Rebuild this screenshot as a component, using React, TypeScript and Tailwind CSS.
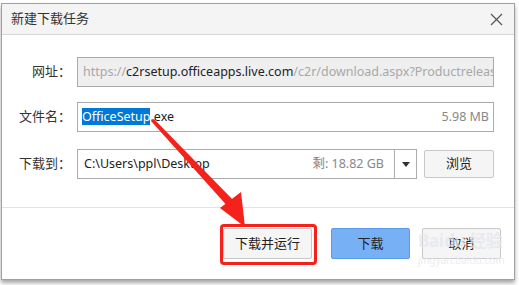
const cjk = '"Noto Sans", "Noto Sans CJK SC", sans-serif';

function CloseIcon() {
  return (
    <svg width="13" height="13" viewBox="0 0 13 13" className="text-[#555]">
      <path d="M1 1 L12 12 M12 1 L1 12" stroke="currentColor" strokeWidth="1.2" fill="none" />
    </svg>
  );
}

function Label({ children }: { children: React.ReactNode }) {
  return <div className="w-[69px] shrink-0 text-right text-[13px] text-[#333]">{children}</div>;
}

export default function App() {
  return (
    <div className="relative h-[285px] w-[519px] overflow-hidden bg-white" style={{ fontFamily: cjk }}>
      <div className="ml-px mt-[3px] flex h-[277px] w-[514px] flex-col border border-[#a0a0a0] bg-white shadow-[0_3px_4px_rgba(0,0,0,0.35)]">
        {/* title bar */}
        <div className="flex h-[31px] shrink-0 items-center justify-between border-b border-[#d6d6d6] bg-[#f4f4f4] pl-[9px] pr-[11px]">
          <span className="text-[13px] text-[#333]">新建下载任务</span>
          <CloseIcon />
        </div>

        {/* form */}
        <div className="flex flex-col pt-[22px]">
          <div className="flex items-center">
            <Label>网址：</Label>
            <div className="ml-[6px] flex h-[30px] w-[417px] items-center overflow-hidden whitespace-nowrap border border-[#ababab] bg-[#efefef] pl-[5px] text-[12.5px]">
              <span className="text-[#a8a8a8]">https://</span>
              <span className="text-[#222]">c2rsetup.officeapps.live.com</span>
              <span className="text-[#a8a8a8]">/c2r/download.aspx?Productreleas</span>
            </div>
          </div>

          <div className="mt-[15px] flex items-center">
            <Label>文件名：</Label>
            <div className="ml-[6px] flex h-[30px] w-[417px] items-center justify-between border border-[#ababab] bg-white pl-[4px] pr-[4px] text-[12.5px]">
              <span className="text-[#222]">
                <span className="bg-[#0078d7] text-white">OfficeSetup</span>.exe
              </span>
              <span className="text-[#888]">5.98 MB</span>
            </div>
          </div>

          <div className="mt-[17px] flex items-center">
            <Label>下载到：</Label>
            <div className="ml-[6px] flex h-[30px] w-[340px] items-center border border-[#ababab] bg-white text-[12.5px]">
              <span className="flex-1 pl-[6px] text-[#222]">C:\Users\ppl\Desktop</span>
              <span className="pr-[10px] text-[#888]">剩: 18.82 GB</span>
              <div className="flex h-full w-[22px] items-center justify-center border-l border-[#ababab]">
                <svg width="8" height="5" viewBox="0 0 8 5">
                  <path d="M0 0 H8 L4 5 Z" fill="#333" />
                </svg>
              </div>
            </div>
            <button className="ml-[7px] flex h-[28px] w-[70px] items-center justify-center rounded-[2px] border border-[#c8c8c8] bg-[#f5f5f5] text-[13px] text-[#222]">
              浏览
            </button>
          </div>
        </div>

        <div className="mt-[28px] border-t border-[#e3e3e3]" />

        {/* footer */}
        <div className="flex justify-end gap-[12px] pr-[13px] pt-[20px]">
          <div className="relative mr-[7px]">
            <button className="flex h-[31px] w-[89px] items-center justify-center rounded-[2px] border border-[#c8c8c8] bg-[#f5f5f5] text-[13px] text-[#222]">
              下载并运行
            </button>
            <div className="pointer-events-none absolute -bottom-[6px] -left-[3px] -right-[5px] -top-[4px] rounded-[4px] border-[3px] border-[#f5221b]" />
          </div>
          <button className="flex h-[31px] w-[79px] items-center justify-center rounded-[2px] border border-[#5b9ae6] bg-[#78b0f6] text-[13px] text-[#222]">
            下载
          </button>
          <button className="flex h-[31px] w-[79px] items-center justify-center rounded-[2px] border border-[#c8c8c8] bg-[#f5f5f5] text-[13px] text-[#222]">
            取消
          </button>
        </div>
      </div>

      {/* watermark */}
      <div className="pointer-events-none absolute left-[418px] top-[232px] flex flex-col items-start whitespace-nowrap leading-none text-[#e2e6ed] opacity-70">
        <span className="text-[17px] font-bold tracking-tight">
          Bai<span className="ml-px">du</span> 经验
        </span>
        <span className="mt-[6px] text-[10px]">jingyan.baidu.com</span>
      </div>

      {/* annotation arrow */}
      <svg className="pointer-events-none absolute left-0 top-0" width="519" height="285" viewBox="0 0 519 285">
        <polygon points="151,121 154,119 236,203 230,209" fill="#f5221b" />
        <polygon points="245,227 220,208 241,192" fill="#f5221b" />
      </svg>
    </div>
  );
}
